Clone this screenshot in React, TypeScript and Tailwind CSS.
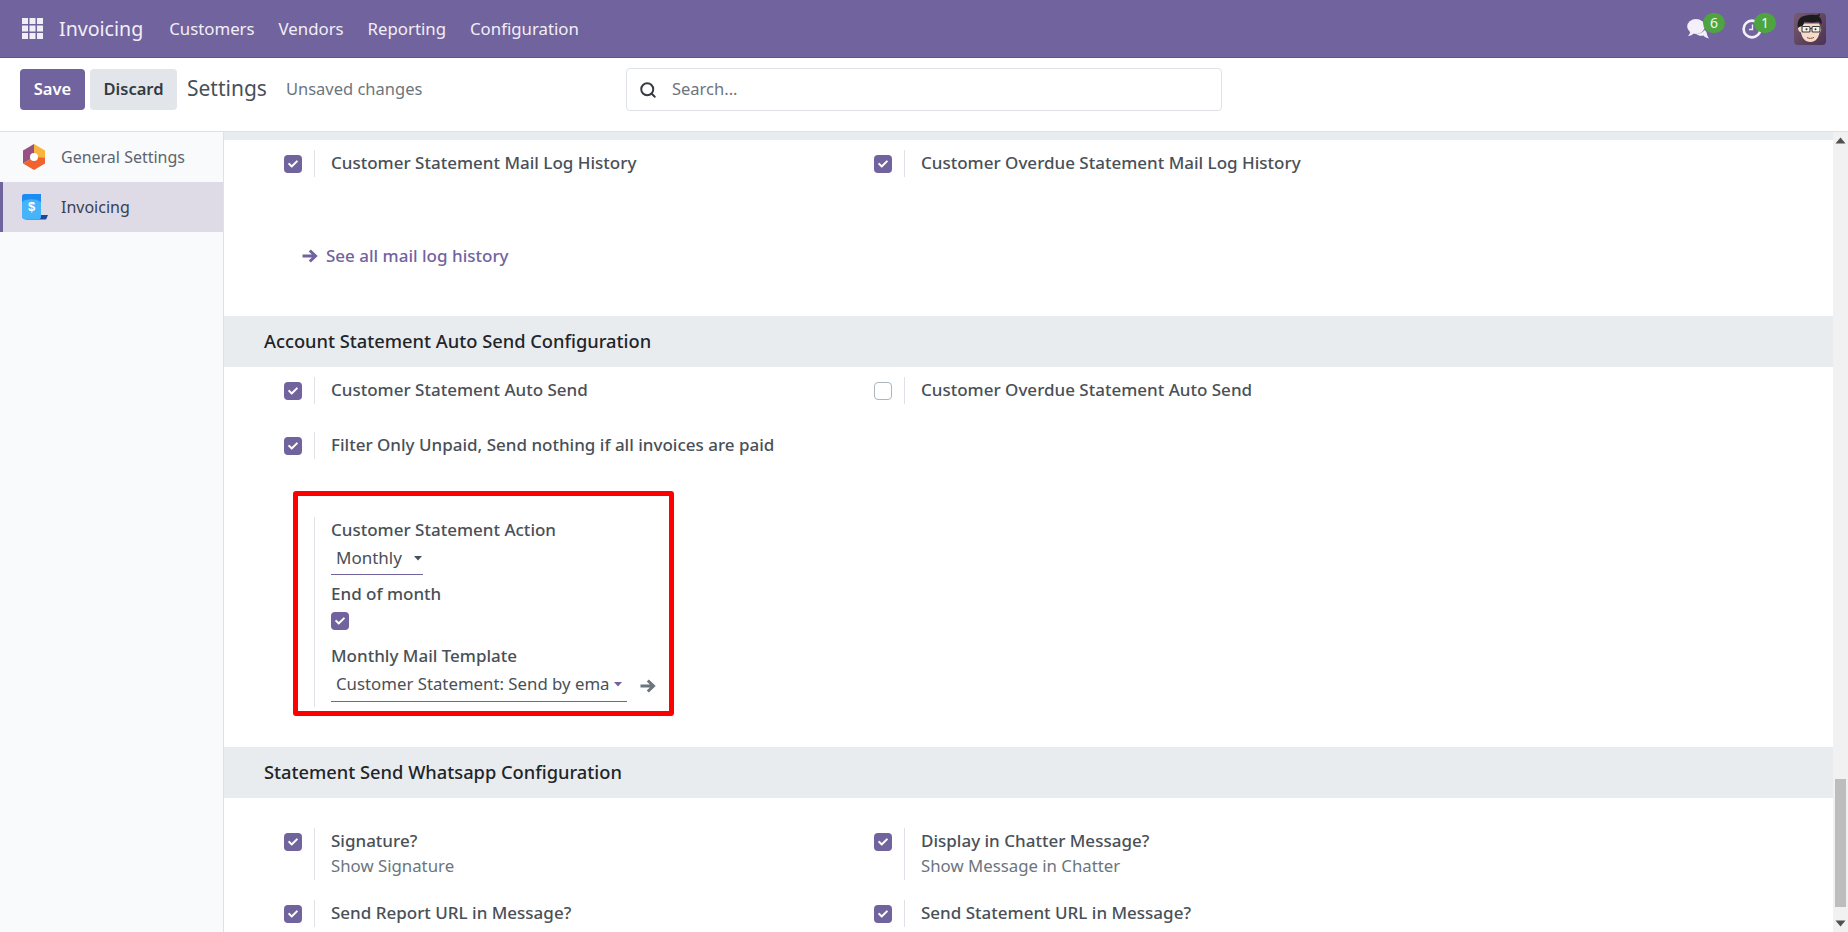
import { FaCheck } from "react-icons/fa";
import { Search } from "lucide-react";

const purple = "#71639e";

function CheckBox({ on = true }: { on?: boolean }) {
  return on ? (
    <span className="flex h-[18px] w-[18px] shrink-0 items-center justify-center rounded-[4px] bg-[#71639e]">
      <FaCheck className="h-[10px] w-[10px] text-white" />
    </span>
  ) : (
    <span className="block h-[18px] w-[18px] shrink-0 rounded-[4px] border border-[#adb5bd] bg-white" />
  );
}

function Arrow({ className = "" }: { className?: string }) {
  return (
    <svg width="16" height="16" viewBox="0 0 16 16" fill="none" stroke="currentColor" strokeWidth="3" className={className}>
      <path d="M0.500 8h12.500M7.800 2.500L13.500 8l-5.700 5.500" />
    </svg>
  );
}

function Setting({ label, help, on = true, className = "" }: { label: string; help?: string; on?: boolean; className?: string }) {
  return (
    <div className={`flex ${className}`}>
      <div className="flex h-[27px] w-[30px] items-center">
        <CheckBox on={on} />
      </div>
      <div className="border-l border-[#dee2e6] pl-4">
        <div className="text-[17px] font-medium leading-[26px] text-[#495057]">{label}</div>
        {help && <div className="mt-[-2px] pb-[1px] text-[16.800px] leading-[27px] text-[#6c757d]">{help}</div>}
      </div>
    </div>
  );
}

function Row({ children, className = "" }: { children: React.ReactNode; className?: string }) {
  return <div className={`grid grid-cols-[590px_1fr] pl-[60px] ${className}`}>{children}</div>;
}

function SectionHead({ title }: { title: string }) {
  return (
    <div className="flex h-[51px] items-center bg-[#e9ecef] pb-[2px] pl-10 text-[18.300px] font-medium text-[#212529]">{title}</div>
  );
}

function Caret({ color = "#495057" }: { color?: string }) {
  return (
    <svg width="10" height="6" viewBox="0 0 10 6" className="shrink-0">
      <path d="M1 1h8L5 5.400z" fill={color} />
    </svg>
  );
}

function AppsIcon() {
  return (
    <svg width="21" height="21" viewBox="0 0 21 21" fill="#f1eff6">
      {[0, 7.5, 15].map((y) =>
        [0, 7.5, 15].map((x) => <rect key={`${x}-${y}`} x={x} y={y} width="6" height="6" />),
      )}
    </svg>
  );
}

function Badge({ n, className }: { n: number; className: string }) {
  return (
    <span className={`absolute flex h-5 w-[22px] items-center justify-center rounded-full bg-[#4ea540] text-[14px] text-[#f1f5ee] ${className}`}>
      {n}
    </span>
  );
}

function ChatIcon() {
  return (
    <svg width="22" height="20" viewBox="0 0 22 20" fill="#f3f0fa">
      <path d="M17.500 11c1.500 1 2 2 2.200 3 .2 1.500 .8 3.500 2.300 5.500-2.600-.6-4.600-1.800-5.600-3-2.600.6-5.600 0-7.200-1.600 3.200 0 7-1.500 8.300-3.900z" />
      <ellipse cx="9" cy="7.500" rx="8.800" ry="7.500" />
      <path d="M3.500 12l3 2.500c-1.200 1.500-3 2.300-5.500 2.500 1.200-1 2-2.800 2.500-5z" />
    </svg>
  );
}

function ClockIcon() {
  return (
    <svg width="20" height="20" viewBox="0 0 20 20" fill="none" stroke="#f3f0fa">
      <circle cx="10" cy="10" r="8.400" strokeWidth="2.600" />
      <path d="M10.500 5.500v5H7" strokeWidth="1.400" />
    </svg>
  );
}

function Avatar() {
  return (
    <svg width="32" height="32" viewBox="0 0 32 32" className="rounded-[4px]">
      <defs>
        <linearGradient id="avbg" x1="0" y1="0" x2="1" y2="1">
          <stop offset="0" stopColor="#7a5a72" />
          <stop offset="1" stopColor="#4c3350" />
        </linearGradient>
      </defs>
      <rect width="32" height="32" fill="url(#avbg)" />
      <path d="M4 15c0 2 1 4 3 4.500C8 25 11 29 16.500 29c5 0 8-4 9-9.500 1.500-.5 2-2 1.500-4l-2-5H8z" fill="#f6dcc8" />
      <path d="M4 15C2.500 8 6 3 12 2.500c3-1 6-1 9-.5 2 0 3.500-.5 5-1.500 0 1.500-.5 2.500-1 3 2.500 2 3 5 2.500 8-1-1.500-2-2.500-3.500-3-5 1.500-10 1-13.500 0-.5 2-1.500 4-2.500 5-1.500 0-3 0-4 1.500z" fill="#1c1c1e" />
      <rect x="8" y="13.500" width="8" height="5.500" rx="1" fill="#f7f3ef" stroke="#3c3c3c" strokeWidth="1.100" />
      <rect x="18" y="13.500" width="8" height="5.500" rx="1" fill="#f7f3ef" stroke="#3c3c3c" strokeWidth="1.100" />
      <path d="M16 15.500h2" stroke="#3c3c3c" />
      <path d="M13 24.500c2 1.200 5 1.200 7-.2" stroke="#8a5444" fill="none" />
      <circle cx="12.500" cy="16.200" r="1" fill="#333" />
      <circle cx="21.500" cy="16.200" r="1" fill="#333" />
    </svg>
  );
}

function GeneralIcon() {
  return (
    <svg width="24" height="26" viewBox="0 0 24 26">
      <path d="M12 0L1 6.500v13L7 16l5-3z" fill="#985184" />
      <path d="M12 0l11 6.500v7L12 13z" fill="#f9b43e" />
      <path d="M1 19.500L12 26l11-6.500v-6L12 13z" fill="#f0622e" />
      <circle cx="12" cy="13" r="4" fill="#fff" />
    </svg>
  );
}

function InvoicingIcon() {
  return (
    <svg width="26" height="26" viewBox="0 0 26 26">
      <path d="M6 21h20l-2 4.500H4z" fill="#1a4a9c" />
      <path d="M2 0h17v22c0 2-1 3.500-3 3.500H4c-2 0-4-1-4-3.500V2c0-1 1-2 2-2z" fill="#1d8cf2" />
      <path d="M0 8c3-3 13-4 19 0v14c0 2-1 3.500-3 3.500H4c-2 0-4-1-4-3.500z" fill="#45b4fb" />
      <text x="9.500" y="17" textAnchor="middle" fontSize="13" fontWeight="700" fill="#fff" fontFamily="Liberation Sans, sans-serif">$</text>
    </svg>
  );
}

export default function App() {
  return (
    <div className="flex h-[932px] flex-col overflow-hidden bg-white font-['Noto_Sans',sans-serif] text-[17px] text-[#495057]">
      {/* navbar */}
      <div className="flex h-[58px] shrink-0 items-center border-b border-[#5f5285] bg-[#71639e] text-[#f1eff6]">
        <div className="ml-[22px]">
          <AppsIcon />
        </div>
        <span className="ml-[16px] text-[19.600px]">Invoicing</span>
        <nav className="ml-[26px] flex gap-6 text-[16.800px]">
          <span>Customers</span>
          <span>Vendors</span>
          <span>Reporting</span>
          <span>Configuration</span>
        </nav>
        <div className="ml-auto mr-[22px] flex items-center">
          <span className="relative mr-[33px] flex">
            <ChatIcon />
            <Badge n={6} className="left-[16px] top-[-6px]" />
          </span>
          <span className="relative mr-[32px] flex">
            <ClockIcon />
            <Badge n={1} className="left-[12px] top-[-6px]" />
          </span>
          <Avatar />
        </div>
      </div>

      {/* control panel */}
      <div className="relative flex h-[74px] shrink-0 items-center border-b border-[#dee2e6] pb-[11px]">
        <button className="ml-5 h-[41px] w-[65px] rounded-[4px] bg-[#71639e] text-[16.500px] font-semibold text-white">Save</button>
        <button className="ml-[5px] h-[41px] w-[87px] rounded-[4px] bg-[#e2e5e9] text-[16.500px] font-semibold text-[#343a40]">Discard</button>
        <span className="ml-[10px] text-[21px] text-[#495057]">Settings</span>
        <span className="ml-[19px] text-[16.500px] text-[#6c757d]">Unsaved changes</span>
        <div className="absolute left-[626px] top-[10px] flex h-[43px] w-[596px] items-center rounded-[4px] border border-[#dee2e6]">
          <Search className="ml-3 h-[18px] w-[18px] text-[#343a40]" strokeWidth={2.6} />
          <span className="ml-[15px] text-[16.500px] text-[#6c757d]">Search...</span>
        </div>
      </div>

      <div className="flex min-h-0 flex-1">
        {/* sidebar */}
        <aside className="w-[224px] shrink-0 border-r border-[#dee2e6] bg-[#f9fafb] text-[16px]">
          <div className="flex h-[50px] items-center pl-[22px]">
            <GeneralIcon />
            <span className="ml-[15px] text-[#5b6570]">General Settings</span>
          </div>
          <div className="flex h-[50px] items-center border-l-[3px] border-[#71639e] bg-[#dedbe7] pl-[19px]">
            <InvoicingIcon />
            <span className="ml-[13px] text-[#374151]">Invoicing</span>
          </div>
        </aside>

        {/* settings body */}
        <main className="relative min-w-0 flex-1 overflow-hidden">
          <div className="h-2 bg-[#e9ecef]" />
          <Row className="mt-[10px]">
            <Setting label="Customer Statement Mail Log History" />
            <Setting label="Customer Overdue Statement Mail Log History" />
          </Row>
          <div className="ml-[78px] mt-[65px] flex h-[27px] items-center font-medium" style={{ color: purple }}>
            <Arrow />
            <span className="ml-[8px]">See all mail log history</span>
          </div>
          <div className="mt-[47px]">
            <SectionHead title="Account Statement Auto Send Configuration" />
          </div>
          <Row className="mt-[10px]">
            <Setting label="Customer Statement Auto Send" />
            <Setting label="Customer Overdue Statement Auto Send" on={false} />
          </Row>
          <Row className="mt-[28px]">
            <Setting label="Filter Only Unpaid, Send nothing if all invoices are paid" className="col-span-2" />
          </Row>

          <div className="ml-[90px] mt-[58px] h-[190px] border-l border-[#dee2e6] pl-4 font-medium">
            <div className="leading-[26px]">Customer Statement Action</div>
            <div className="mt-[2px] flex h-[30px] w-[92px] items-center justify-between border-b border-[#71639e] pb-[3px] pl-[5px] font-normal">
              <span>Monthly</span>
              <Caret />
            </div>
            <div className="mt-[5px] leading-[27px]">End of month</div>
            <div className="mt-[5px]">
              <CheckBox />
            </div>
            <div className="mt-[12px] leading-[27px]">Monthly Mail Template</div>
            <div className="flex items-center">
              <div className="flex h-[33px] w-[296px] items-center border-b border-[#71639e] pb-[3px] pl-[5px] pr-[4px] text-[16.800px] font-normal">
                <span className="min-w-0 flex-1 overflow-hidden whitespace-nowrap">Customer Statement: Send by ema</span>
                <Caret color={purple} />
              </div>
              <Arrow className="ml-[13px] text-[#6c757d]" />
            </div>
          </div>

          {/* red annotation from the screenshot */}
          <div className="absolute left-[69px] top-[359px] h-[225px] w-[381px] rounded-[3px] border-[5px] border-[#ff0000]" />

          <div className="mt-[40px]">
            <SectionHead title="Statement Send Whatsapp Configuration" />
          </div>
          <Row className="mt-[30px]">
            <Setting label="Signature?" help="Show Signature" />
            <Setting label="Display in Chatter Message?" help="Show Message in Chatter" />
          </Row>
          <Row className="mt-[20px]">
            <Setting label="Send Report URL in Message?" />
            <Setting label="Send Statement URL in Message?" />
          </Row>
        </main>

        {/* scrollbar */}
        <div className="flex w-[15px] shrink-0 flex-col items-center bg-[#f1f1f1]">
          <svg width="11" height="7" viewBox="0 0 11 7" className="mt-[5px]">
            <path d="M5.500 0.500L10.500 6.500H0.500z" fill="#505050" />
          </svg>
          <div className="mt-[635px] h-[128px] w-[11px] bg-[#bdbdbd]" />
          <svg width="11" height="7" viewBox="0 0 11 7" className="mt-[13px]">
            <path d="M0.500 0.500H10.500L5.500 6.500z" fill="#505050" />
          </svg>
        </div>
      </div>
    </div>
  );
}
